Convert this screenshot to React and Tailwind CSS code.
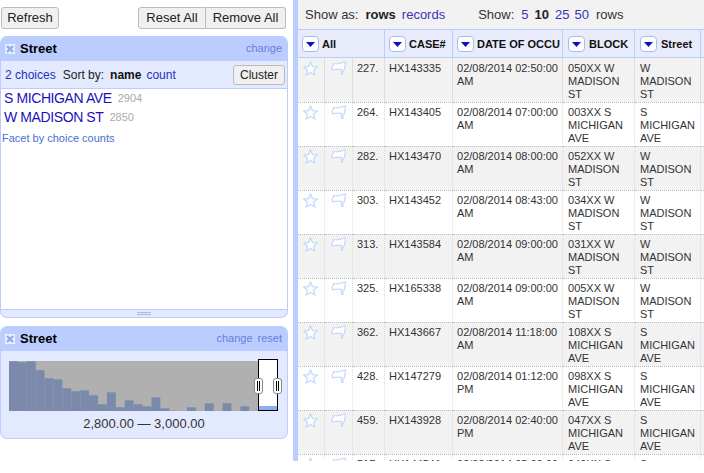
import React from "react";

const ROWS = [
  { n: "227.", id: "HX143335", date: "02/08/2014 02:50:00 AM", block: "050XX W MADISON ST", street: "W MADISON ST" },
  { n: "264.", id: "HX143405", date: "02/08/2014 07:00:00 AM", block: "003XX S MICHIGAN AVE", street: "S MICHIGAN AVE" },
  { n: "282.", id: "HX143470", date: "02/08/2014 08:00:00 AM", block: "052XX W MADISON ST", street: "W MADISON ST" },
  { n: "303.", id: "HX143452", date: "02/08/2014 08:43:00 AM", block: "034XX W MADISON ST", street: "W MADISON ST" },
  { n: "313.", id: "HX143584", date: "02/08/2014 09:00:00 AM", block: "031XX W MADISON ST", street: "W MADISON ST" },
  { n: "325.", id: "HX165338", date: "02/08/2014 09:00:00 AM", block: "005XX W MADISON ST", street: "W MADISON ST" },
  { n: "362.", id: "HX143667", date: "02/08/2014 11:18:00 AM", block: "108XX S MICHIGAN AVE", street: "S MICHIGAN AVE" },
  { n: "428.", id: "HX147279", date: "02/08/2014 01:12:00 PM", block: "098XX S MICHIGAN AVE", street: "S MICHIGAN AVE" },
  { n: "459.", id: "HX143928", date: "02/08/2014 02:40:00 PM", block: "047XX S MICHIGAN AVE", street: "S MICHIGAN AVE" },
  { n: "517.", id: "HX144541", date: "02/08/2014 05:00:00 PM", block: "049XX S MICHIGAN AVE", street: "S MICHIGAN AVE" },
];

// bar heights of the histogram, left to right
const BARS = [49.7, 48.7, 49.7, 40.7, 32.7, 31.7, 22.7, 19.7, 20.7, 15.7, 6.7, 18.7, 3.7, 10.7, 6.7, 4.7, 13.7, 2.7, 0.7, 0.4, 3.7, 0.4, 7.7, 0.4, 7.7, 0.4, 4.7, 0.4];

function CloseBox() {
  return (
    <svg width="10" height="10" viewBox="0 0 10 10" className="shrink-0">
      <rect width="10" height="10" fill="#e8eeff" />
      <path d="M2 2 L8 8 M8 2 L2 8" stroke="#8fabf0" strokeWidth="2.4" />
    </svg>
  );
}

function Arrow() {
  return (
    <span className="flex h-[16px] w-[17px] shrink-0 items-center justify-center rounded-[4px] border border-[#a9b9f5] bg-white">
      <svg width="9" height="5" viewBox="0 0 9 5">
        <path d="M0 0 H9 L4.5 5 Z" fill="#1111bb" />
      </svg>
    </span>
  );
}

function Star() {
  return (
    <svg width="15" height="15" viewBox="0 0 15 15" className="block">
      <path d="M7.5 1 L9.4 5.6 L14.3 6 L10.6 9.2 L11.8 14 L7.5 11.4 L3.2 14 L4.4 9.2 L0.7 6 L5.6 5.6 Z" fill="#fff" stroke="#c3d9fb" strokeWidth="1.2" />
    </svg>
  );
}

function Flag() {
  return (
    <svg width="16" height="15" viewBox="0 0 16 15" className="block">
      <path d="M1 6.5 L3 2.5 C6 3.2 10 2.6 14.5 1 L13.5 8.5 L12.2 9 L11.7 13.5 L10.6 13.5 L10.3 8.3 L5 8 L1.5 9 Z" fill="#fff" stroke="#c3d9fb" strokeWidth="1.2" />
    </svg>
  );
}

function Handle() {
  return (
    <span className="flex h-[16px] w-[9px] items-center justify-center gap-[1px] rounded-[3px] border border-[#888] bg-white">
      <span className="h-[10px] w-[1px] bg-black" />
      <span className="h-[10px] w-[1px] bg-black" />
    </span>
  );
}

function Histogram() {
  return (
    <div className="relative mt-[10px] ml-[8px] h-[50px] w-[269px]">
      <svg width="249" height="50" viewBox="0 0 249 50" className="block">
        <rect width="249" height="50" fill="#b0b0b0" />
        {BARS.map((h, i) => (
          <rect key={i} x={i * 8.9} y={50 - h} width="8.9" height={h} fill={h < 1 ? "#b59a94" : "#7b8aab"} />
        ))}
      </svg>
      <div className="absolute top-[-2px] left-[249px] flex h-[52px] w-[20px] flex-col justify-end border border-black bg-white">
        <div className="h-[4px] bg-[#8fabee]" />
      </div>
      <div className="absolute top-[17px] left-[245px]"><Handle /></div>
      <div className="absolute top-[17px] left-[264px]"><Handle /></div>
    </div>
  );
}

function LeftPanel() {
  return (
    <div className="flex w-[293px] shrink-0 flex-col">
      <div className="flex h-[36px] w-[286px] items-start justify-between pt-[7px] pl-[1px]">
        <button className="h-[22px] w-[58px] rounded-[3px] border border-[#bbb] bg-[#f0f0f0] text-[13px] text-[#222]">Refresh</button>
        <div className="flex">
          <button className="h-[22px] w-[68px] rounded-l-[3px] border border-[#bbb] bg-[#f0f0f0] text-[13px] text-[#222]">Reset All</button>
          <button className="h-[22px] w-[80px] rounded-r-[3px] border border-l-0 border-[#bbb] bg-[#f0f0f0] text-[13px] text-[#222]">Remove All</button>
        </div>
      </div>

      <div className="h-[282px] w-[288px] overflow-hidden rounded-[7px] border border-t-0 border-[#bbccff] bg-[#e3e9ff]">
        <div className="flex h-[25px] items-center bg-[#bbccff] pr-[5px] pl-[4px]">
          <CloseBox />
          <span className="ml-[5px] text-[13px] font-bold text-black">Street</span>
          <span className="ml-auto text-[11px] text-[#6a7fd9]">change</span>
        </div>
        <div className="flex h-[28px] items-center border-b border-[#bbccff] pr-[2px] pl-[4px] text-[12px]">
          <span className="text-[#2233bb]">2 choices</span>
          <span className="ml-[7px] text-[#222]">Sort by:</span>
          <span className="ml-[6px] font-bold text-[#111]">name</span>
          <span className="ml-[5px] text-[#2233bb]">count</span>
          <button className="ml-auto h-[20px] w-[52px] rounded-[3px] border border-[#bbb] bg-[#f0f0f0] text-[12px] text-[#222]">Cluster</button>
        </div>
        <div className="h-[220px] bg-white">
          <div className="flex h-[19px] items-center pl-[3px]">
            <span className="text-[14px] tracking-[-0.4px] text-[#1a11bb]">S MICHIGAN AVE</span>
            <span className="ml-[6px] text-[11px] text-[#aaa]">2904</span>
          </div>
          <div className="flex h-[19px] items-center pl-[3px]">
            <span className="text-[14px] tracking-[-0.4px] text-[#1a11bb]">W MADISON ST</span>
            <span className="ml-[6px] text-[11px] text-[#aaa]">2850</span>
          </div>
          <div className="mt-[3px] pl-[1px] text-[11px] text-[#4a6fd0]">Facet by choice counts</div>
        </div>
        <div className="flex h-[8px] flex-col items-center justify-center gap-[1px] border-t border-[#bbccff]">
          <span className="h-[1px] w-[14px] bg-[#a9b9d9]" />
          <span className="h-[1px] w-[14px] bg-[#a9b9d9]" />
        </div>
      </div>

      <div className="mt-[8px] h-[113px] w-[288px] rounded-[7px] border border-t-0 border-[#bbccff] bg-[#e3e9ff]">
        <div className="flex h-[25px] items-center rounded-t-[7px] bg-[#bbccff] pr-[5px] pl-[4px]">
          <CloseBox />
          <span className="ml-[5px] text-[13px] font-bold text-black">Street</span>
          <span className="ml-auto text-[11px] text-[#6a7fd9]">change</span>
          <span className="ml-[5px] text-[11px] text-[#6a7fd9]">reset</span>
        </div>
        <Histogram />
        <div className="mt-[5px] text-center text-[13px] leading-[16px] text-[#333]">2,800.00 — 3,000.00</div>
      </div>
    </div>
  );
}

function TopBar() {
  return (
    <div className="flex h-[29px] items-center bg-[#f2f2f2] pl-[7px] text-[13px] text-[#333]">
      <span>Show as:</span>
      <b className="ml-[7px] text-[#222]">rows</b>
      <span className="ml-[6px] text-[#3a33bb]">records</span>
      <span className="ml-[33px]">Show:</span>
      <span className="ml-[7px] text-[#3a33bb]">5</span>
      <b className="ml-[6px] text-[#222]">10</b>
      <span className="ml-[6px] text-[#3a33bb]">25</span>
      <span className="ml-[5px] text-[#3a33bb]">50</span>
      <span className="ml-[7px]">rows</span>
    </div>
  );
}

function HeaderCell({ label, colSpan, wide }) {
  return (
    <th colSpan={colSpan} className="overflow-hidden border-t border-r border-b border-[#bbccff] p-0 pt-[1px] text-left">
      <div className={wide ? "flex items-center gap-[4px] pl-[5px] text-[11px] font-bold whitespace-nowrap text-[#111]" : "flex items-center gap-[3px] pl-[4px] text-[11px] font-bold whitespace-nowrap text-[#111]"}>
        <Arrow />
        <span>{label}</span>
      </div>
    </th>
  );
}

function Table() {
  return (
    <table className="w-[510px] table-fixed border-separate border-spacing-0">
      <colgroup>
        <col className="w-[27px]" />
        <col className="w-[28px]" />
        <col className="w-[32px]" />
        <col className="w-[68px]" />
        <col className="w-[110px]" />
        <col className="w-[72px]" />
        <col className="w-[66px]" />
        <col className="w-[107px]" />
      </colgroup>
      <thead>
        <tr className="h-[29px] bg-[#e8ebf9]">
          <HeaderCell label="All" colSpan={3} />
          <HeaderCell label="CASE#" />
          <HeaderCell label="DATE OF OCCU" />
          <HeaderCell label="BLOCK" wide />
          <HeaderCell label="Street" wide />
          <th className="border-t border-b border-[#bbccff]" />
        </tr>
      </thead>
      <tbody>
        {ROWS.map((r, i) => (
          <tr key={r.n} className={i % 2 === 0 ? "h-[44px] bg-[#f2f2f2]" : "h-[44px] bg-white"}>
            {[
              <div className="mt-[-1px] pl-[5px]"><Star /></div>,
              <div className="mt-[-1px] pl-[6px]"><Flag /></div>,
              <div className="pl-[4px]">{r.n}</div>,
              <div className="pl-[4px]">{r.id}</div>,
              <div className="pl-[4px]">{r.date}</div>,
              <div className="pr-[3px] pl-[5px]">{r.block}</div>,
              <div className="pr-[3px] pl-[5px]">{r.street}</div>,
              null,
            ].map((cell, j) => (
              <td
                key={j}
                className={
                  i === 0
                    ? "border-r border-[#ddd] p-0 pt-[4px] align-top text-[11px] leading-[13px] text-[#333]"
                    : "border-t border-r border-dotted border-t-[#bbb] border-r-[#ddd] p-0 pt-[3px] align-top text-[11px] leading-[13px] text-[#333]"
                }
              >
                {cell}
              </td>
            ))}
          </tr>
        ))}
      </tbody>
    </table>
  );
}

export default function App() {
  return (
    <div className="h-[473px] w-[704px] overflow-hidden bg-white font-['Liberation_Sans',Arial,sans-serif]">
      <div className="flex h-[461px]">
        <LeftPanel />
        <div className="w-[5px] shrink-0 bg-[#bbccff]" />
        <div className="min-w-0 flex-1 overflow-hidden">
          <TopBar />
          <Table />
        </div>
      </div>
    </div>
  );
}
